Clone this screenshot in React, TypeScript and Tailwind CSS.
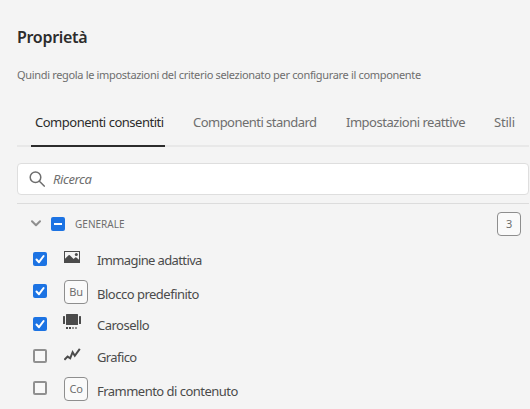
import type { ReactNode } from "react";

function Checkbox({ checked }: { checked: boolean }) {
  if (!checked) {
    return <span className="block size-3.5 shrink-0 rounded-[2px] border-2 border-[#909090] bg-[#f8f8f8]" />;
  }
  return (
    <span className="block size-3.5 shrink-0 rounded-[2px] bg-[#1c73e3]">
      <svg viewBox="0 0 14 14" className="size-3.5" fill="none" stroke="#fff" strokeWidth="2" strokeLinecap="round" strokeLinejoin="round">
        <path d="M3.5 7.5 6 10.2 10.6 4" />
      </svg>
    </span>
  );
}

function Badge({ children }: { children: ReactNode }) {
  return (
    <span className="flex size-6 items-center justify-center rounded-[4px] border border-[#8e8e8e] bg-[#fafafa] pb-px text-[11px] leading-none tracking-[-0.3px] text-[#6e6e6e]">
      {children}
    </span>
  );
}

function ImageIcon() {
  return (
    <svg width="16" height="12" viewBox="0 0 16 12" className="block">
      <path fillRule="evenodd" fill="#4b4b4b" d="M0 0H16V12H0ZM1 1V7.8L4.6 4.2Q5.2 3.7 5.8 4.2L9.6 8 11.2 6.6Q11.8 6.1 12.4 6.6L15 8.8V1Z" />
      <circle cx="12.3" cy="3.5" r="1.5" fill="#4b4b4b" />
    </svg>
  );
}

function CarouselIcon() {
  return (
    <svg width="18" height="16" viewBox="0 0 18 16" className="block" fill="#4b4b4b">
      <rect x="3" y="0" width="12" height="11" rx=".5" />
      <rect x="0" y="2" width="2" height="8" rx=".5" />
      <rect x="16" y="2" width="2" height="8" rx=".5" />
      <path d="M3 13h2v2H3zM6 13h2v2H6z" />
      <path fill="#929292" d="M9 13h2v2H9zM12 13h2v2h-2z" />
    </svg>
  );
}

function ChartIcon() {
  return (
    <svg width="17" height="13" viewBox="0 0 17 13" className="block" fill="none" stroke="#4b4b4b" strokeWidth="2">
      <path d="M.4 11.8 3.6 8.6 6.2 10.3 8.6 4.2 10.8 7.8 15.8 .8" />
    </svg>
  );
}

const rows = [
  { label: "Immagine adattiva", checked: true, icon: <ImageIcon />, row: "h-8", iconPos: "pt-2", textPos: "pt-[7px]", track: "tracking-[-0.62px]" },
  { label: "Blocco predefinito", checked: true, icon: <Badge>Bu</Badge>, row: "h-[33px]", iconPos: "pt-[5px]", textPos: "pt-[9px]", track: "tracking-[-0.5px]" },
  { label: "Carosello", checked: true, icon: <CarouselIcon />, row: "h-8", iconPos: "pt-1.5 -ml-px", textPos: "pt-[7px]", track: "tracking-[-0.5px]" },
  { label: "Grafico", checked: false, icon: <ChartIcon />, row: "h-8", iconPos: "pt-2", textPos: "pt-[7px]", track: "tracking-[-0.6px]" },
  { label: "Frammento di contenuto", checked: false, icon: <Badge>Co</Badge>, row: "h-[37px]", iconPos: "pt-[5px]", textPos: "pt-[9px]", track: "tracking-[-0.52px]" },
];

export default function App() {
  return (
    <main className="h-[409px] w-[530px] overflow-hidden bg-[#f4f4f4] pl-[17px] pr-px pt-[27px] font-['Noto_Sans',sans-serif] text-[#4b4b4b]">
      <h1 className="h-5 whitespace-nowrap text-[16px] font-semibold leading-5 tracking-[-0.3px] text-[#2c2c2c]">Proprietà</h1>
      <p className="mt-5 h-4 whitespace-nowrap text-[11px] leading-4 tracking-[-0.33px] text-[#6e6e6e]">
        Quindi regola le impostazioni del criterio selezionato per configurare il componente
      </p>
      <nav className="mt-[17px] flex h-[47px] whitespace-nowrap border-b-2 border-[#e8e8e8] pl-3.5 text-[13px] leading-5 text-[#6e6e6e]">
        <span className="-mb-0.5 w-[134px] border-b-2 border-[#2c2c2c] pl-1 pt-3 tracking-[-0.48px] text-[#2c2c2c]">Componenti consentiti</span>
        <span className="ml-7 w-[153px] pt-3 tracking-[-0.53px]">Componenti standard</span>
        <span className="w-[148px] pt-3 tracking-[-0.48px]">Impostazioni reattive</span>
        <span className="pt-3 tracking-[-0.2px]">Stili</span>
      </nav>
      <div className="mt-4 flex h-8 items-center rounded-[4px] border border-[#dedede] bg-white pl-[11px]">
        <svg width="16" height="16" viewBox="0 0 16 16" fill="none" stroke="#6e6e6e" strokeWidth="1.5" strokeLinecap="round">
          <circle cx="6.5" cy="6.3" r="5.3" />
          <path d="m10.4 10.2 4.8 4.9" />
        </svg>
        <span className="ml-2 pb-px text-[13px] italic leading-5 tracking-[-0.4px] text-[#6e6e6e]">Ricerca</span>
      </div>
      <div className="mt-2 flex h-10 items-center border-t border-[#dcdcdc] pl-3.5 pr-2">
        <svg width="10" height="7" viewBox="0 0 10 7" fill="none" stroke="#8e8e8e" strokeWidth="2" strokeLinecap="round" strokeLinejoin="round">
          <path d="m1 1.2 4 4 4-4" />
        </svg>
        <span className="ml-2.5 flex size-3.5 items-center justify-center rounded-[2px] bg-[#1c73e3]">
          <span className="h-0.5 w-2 bg-white" />
        </span>
        <span className="ml-2.5 text-[10px] leading-4 tracking-[0.02px] text-[#6e6e6e]">GENERALE</span>
        <span className="ml-auto"><Badge>3</Badge></span>
      </div>
      <ul className="pl-4">
        {rows.map((r) => (
          <li key={r.label} className={`flex ${r.row}`}>
            <span className="pt-[9px]"><Checkbox checked={r.checked} /></span>
            <span className="ml-[17px] w-[33px] shrink-0">
              <span className={`block ${r.iconPos}`}>{r.icon}</span>
            </span>
            <span className={`whitespace-nowrap text-[13px] leading-5 ${r.textPos} ${r.track}`}>{r.label}</span>
          </li>
        ))}
      </ul>
    </main>
  );
}
